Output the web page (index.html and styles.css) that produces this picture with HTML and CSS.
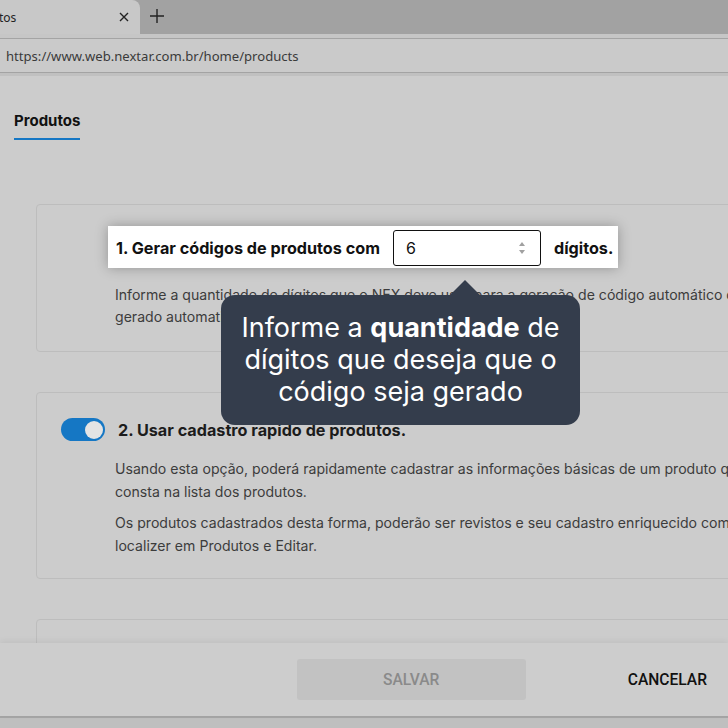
FILE: index.html
```html
<!DOCTYPE html>
<html lang="pt-BR">
<head>
  <meta charset="UTF-8" />
  <meta name="viewport" content="width=device-width, initial-scale=1.0" />
  <title>Produtos</title>
  <link rel="stylesheet" href="styles.css">
</head>
<body>
  <div class="browser">

    <!-- Tab strip -->
    <div class="tabstrip">
      <div class="tab">
        <span class="tab-title">tos</span>
        <svg class="tab-close" width="10" height="10" viewBox="0 0 10 10"><path d="M1 1L9 9M9 1L1 9" /></svg>
      </div>
      <svg class="tab-new" width="14" height="14" viewBox="0 0 14 14"><path d="M7 0V14M0 7H14" /></svg>
    </div>

    <!-- Address bar -->
    <div class="addressbar">
      <span class="url">https://www.web.nextar.com.br/home/products</span>
    </div>

    <!-- Page -->
    <main class="page">
      <nav class="tabs">
        <a class="tabs-item active">Produtos</a>
      </nav>

      <section class="card">
        <div class="card-side"></div>
        <div class="card-body">
          <div class="code-row">
            <span class="code-label">1. Gerar códigos de produtos com</span>
            <div class="number-input">
              <span class="number-value">6</span>
              <svg class="spinner" width="8" height="16" viewBox="0 0 8 16"><path d="M4 2L7 6H1Z" /><path d="M4 14L7 10H1Z" /></svg>
            </div>
            <span class="code-label">dígitos.</span>
          </div>
          <p class="card-text">Informe a quantidade de dígitos que o NEX deve usar para a geração de código automático de produtos.<br>gerado automaticamente. Para não gerar o código, deixe em branco.</p>
        </div>
      </section>

      <section class="card">
        <div class="card-side">
          <span class="toggle on"><span class="toggle-knob"></span></span>
        </div>
        <div class="card-body">
          <div class="card-title">2. Usar cadastro rapido de produtos.</div>
          <p class="card-text">Usando esta opção, poderá rapidamente cadastrar as informações básicas de um produto que não<br>consta na lista dos produtos.</p>
          <p class="card-text">Os produtos cadastrados desta forma, poderão ser revistos e seu cadastro enriquecido com mais dados,<br>localizer em Produtos e Editar.</p>
        </div>
      </section>

      <section class="card card-next"></section>

      <!-- Hint bubble over the first option -->
      <div class="hint">
        Informe a <strong>quantidade</strong> de dígitos que deseja que o código seja gerado
      </div>
    </main>

    <!-- Actions -->
    <footer class="actions">
      <button class="btn btn-save" disabled>SALVAR</button>
      <button class="btn btn-cancel">CANCELAR</button>
    </footer>

    <div class="statusbar"></div>
  </div>
</body>
</html>
```

FILE: styles.css
```css
:root {
  --page-bg: #cccccc;
  --card-border: #bdbdbd;
  --text-strong: #1c1c1c;
  --text-muted: #3c3c3c;
  --accent: #1577c4;
  --hint-bg: #343d4c;
}

* {
  box-sizing: border-box;
  margin: 0;
  padding: 0;
}

html, body {
  height: 100%;
  overflow: hidden;
  font-family: Inter, "Noto Sans", sans-serif;
  background-color: var(--page-bg);
}

.browser {
  display: flex;
  flex-direction: column;
  height: 100vh;
}

/* Tab strip */
.tabstrip {
  display: flex;
  align-items: center;
  height: 34px;
  background-color: #a2a2a2;
}

.tab {
  display: flex;
  align-items: center;
  justify-content: space-between;
  align-self: stretch;
  width: 140px;
  padding: 0 11px 0 0;
  background-color: #c8c8c8;
  border-top-right-radius: 8px;
}

.tab-title {
  font-family: "Noto Sans", sans-serif;
  font-size: 12px;
  color: #222;
  margin-left: -1px;
}

.tab-close path,
.tab-new path {
  stroke: #222;
  stroke-width: 1.4;
  fill: none;
}

.tab-new {
  margin-left: 10px;
  margin-top: -3px;
}

/* Address bar */
.addressbar {
  height: 39px;
  display: flex;
  align-items: center;
  padding: 0 6px;
  background-color: #cacaca;
  border-top: 4px solid #c6c6c6;
  border-bottom: 1px solid #a3a3a3;
  box-shadow: inset 0 1px 0 #a4a4a4;
}

.url {
  font-family: "Noto Sans", sans-serif;
  font-size: 13.1px;
  color: #3a3a3a;
  padding-top: 1px;
}

/* Page */
.page {
  position: relative;
  flex: 1;
  overflow: hidden;
  padding: 0 0 0 36px;
  border-top: 3px solid #c0c0c0;
}

.tabs {
  display: flex;
  margin: 35px 0 0 -22px;
}

.tabs-item {
  font-size: 15px;
  font-weight: 700;
  line-height: 20px;
  color: #111;
  padding-bottom: 7px;
}

.tabs-item.active {
  border-bottom: 2px solid var(--accent);
}

.card {
  display: grid;
  grid-template-columns: 44px 1fr;
  column-gap: 10px;
  width: 780px;
  margin-top: 64px;
  padding: 21px 24px 23px;
  border: 1px solid var(--card-border);
  border-radius: 4px;
}

.card + .card {
  margin-top: 40px;
}

.card:nth-of-type(2) {
  padding-top: 25px;
  padding-bottom: 21px;
}

.card-next {
  height: 60px;
}

.card-side {
  display: flex;
  align-items: flex-start;
}

.card-body {
  min-width: 0;
}

.code-row {
  display: inline-flex;
  align-items: center;
  gap: 13px;
  margin-left: -7px;
  padding: 4px 5px 2px 8px;
  background-color: #fff;
  box-shadow: 0 0 12px rgba(0, 0, 0, 0.28);
  position: relative;
}

.code-label {
  font-size: 16.2px;
  font-weight: 700;
  color: #111;
  white-space: nowrap;
}

.number-input {
  display: flex;
  align-items: center;
  justify-content: space-between;
  width: 148px;
  height: 36px;
  padding: 0 14px 0 12px;
  border: 1px solid #111;
  border-radius: 3px;
  background-color: #fff;
}

.number-value {
  font-size: 16px;
  color: #111;
}

.spinner path {
  fill: #a0a0a0;
}

.card-text {
  margin-top: 16px;
  font-size: 14.1px;
  line-height: 22px;
  color: var(--text-muted);
  white-space: nowrap;
}

.card-title + .card-text {
  margin-top: 16px;
}

.card-title ~ .card-text {
  line-height: 22.5px;
}

.card-text + .card-text {
  margin-top: 9px;
}

.card-title {
  font-size: 16.2px;
  font-weight: 700;
  line-height: 24px;
  color: var(--text-strong);
  padding-left: 3px;
}

/* Switch */
.toggle {
  display: flex;
  align-items: center;
  justify-content: flex-end;
  width: 44px;
  height: 23px;
  padding: 0 2px;
  border-radius: 12px;
  background-color: #ccc;
}

.toggle.on {
  background-color: var(--accent);
}

.toggle-knob {
  width: 18px;
  height: 18px;
  border-radius: 50%;
  background-color: #e4e4e4;
}

/* Hint bubble */
.hint {
  position: absolute;
  left: 221px;
  top: 219px;
  width: 359px;
  padding: 17px 10px 17px;
  border-radius: 14px;
  background-color: var(--hint-bg);
  color: #fff;
  font-size: 27px;
  line-height: 32px;
  text-align: center;
}

.hint strong {
  font-weight: 700;
}

.hint::before {
  content: "";
  position: absolute;
  top: -15px;
  left: 229px;
  border-left: 15px solid transparent;
  border-right: 15px solid transparent;
  border-bottom: 15px solid var(--hint-bg);
}

/* Actions */
.actions {
  display: flex;
  align-items: flex-start;
  justify-content: flex-end;
  gap: 86px;
  height: 73px;
  padding: 16px 5px 0 0;
  background-color: #cdcdcd;
  box-shadow: 0 -2px 6px rgba(0, 0, 0, 0.06);
  position: relative;
}

.btn {
  font-family: Roboto, sans-serif;
  font-size: 15.6px;
  font-weight: 500;
  border: none;
  background: none;
  height: 41px;
  border-radius: 3px;
}

.btn-save {
  width: 229px;
  background-color: #c2c2c2;
  color: #8a8a8a;
}

.btn-cancel {
  padding: 0 16px;
  color: #111;
}

.statusbar {
  height: 12px;
  background-color: #bfbfbf;
  border-top: 2px solid #a5a5a5;
}
```
